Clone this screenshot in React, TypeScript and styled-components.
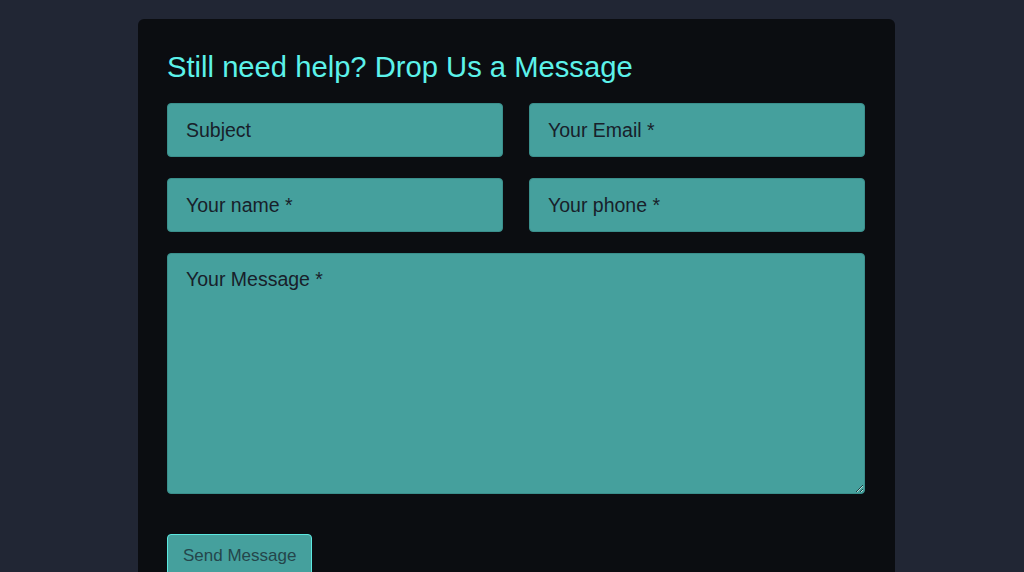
import React from "react";
import styled, { createGlobalStyle } from "styled-components";

const Global = createGlobalStyle`
  html, body { margin: 0; padding: 0; background: #212634; }
  body { font-family: "Liberation Sans", Arial, sans-serif; overflow: hidden; }
  * { box-sizing: border-box; }
`;

const Page = styled.div`
  padding: 19px 0 0 138px;
  height: 572px;
`;

const Card = styled.form`
  width: 757px;
  height: 600px;
  background: #0b0d11;
  border-radius: 6px;
  padding: 32px 30px 0 29px;
`;

const Title = styled.h2`
  margin: 0 0 20px;
  font-size: 29.2px;
  line-height: 32px;
  font-weight: 400;
  color: #5cf2ea;
`;

const Grid = styled.div`
  display: grid;
  grid-template-columns: 1fr 1fr;
  column-gap: 26px;
  row-gap: 21px;
`;

const Field = styled.input`
  width: 100%;
  height: 54px;
  padding: 0 18px;
  font-family: "Liberation Sans", Arial, sans-serif;
  font-size: 19.5px;
  color: #18202a;
  background: #45a09d;
  border: 1px solid #3a8f8c;
  border-radius: 4px;
  outline: none;
  &::placeholder { color: #18202a; opacity: 1; }
`;

const Message = styled.textarea`
  grid-column: 1 / span 2;
  width: 100%;
  height: 241px;
  padding: 14px 18px;
  font-family: "Liberation Sans", Arial, sans-serif;
  font-size: 19.5px;
  line-height: 23px;
  color: #18202a;
  background: #45a09d;
  border: 1px solid #3a8f8c;
  border-radius: 4px;
  outline: none;
  resize: vertical;
  display: block;
  &::placeholder { color: #18202a; opacity: 1; }
`;

const Button = styled.button`
  margin-top: 40px;
  height: 44px;
  padding: 0 15px;
  font-family: "Liberation Sans", Arial, sans-serif;
  font-size: 17px;
  color: #24464b;
  background: #45a09d;
  border: 1px solid #5ce8e0;
  border-radius: 4px;
  cursor: pointer;
`;

export default function App() {
  return (
    <>
      <Global />
      <Page>
        <Card onSubmit={(e) => e.preventDefault()}>
          <Title>Still need help? Drop Us a Message</Title>
          <Grid>
            <Field placeholder="Subject" />
            <Field placeholder="Your Email *" />
            <Field placeholder="Your name *" />
            <Field placeholder="Your phone *" />
            <Message placeholder="Your Message *" />
          </Grid>
          <Button type="submit">Send Message</Button>
        </Card>
      </Page>
    </>
  );
}
